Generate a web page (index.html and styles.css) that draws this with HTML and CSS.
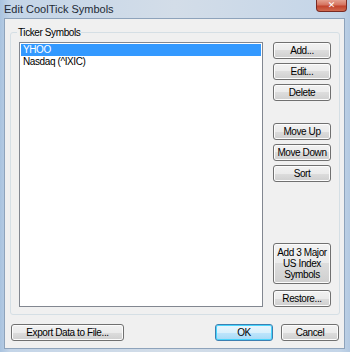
FILE: index.html
```html
<!DOCTYPE html>
<html lang="en">
<head>
    <meta charset="UTF-8">
    <title>Edit CoolTick Symbols</title>
    <link rel="stylesheet" href="styles.css">
</head>
<body>
    <div class="window">
        <div class="titlebar">
            <span class="title">Edit CoolTick Symbols</span>
            <span class="close-btn">&#x2715;</span>
        </div>
        <div class="client">
            <div class="group">
                <span class="group-label">Ticker Symbols</span>
                <div class="listbox">
                    <div class="item selected">YHOO</div>
                    <div class="item">Nasdaq (^IXIC)</div>
                </div>
                <div class="side">
                    <button class="btn">Add...</button>
                    <button class="btn">Edit...</button>
                    <button class="btn">Delete</button>
                    <button class="btn spaced">Move Up</button>
                    <button class="btn">Move Down</button>
                    <button class="btn">Sort</button>
                    <button class="btn tall">Add 3 Major<br>US Index<br>Symbols</button>
                    <button class="btn">Restore...</button>
                </div>
            </div>
            <div class="bottom">
                <button class="btn export">Export Data to File...</button>
                <button class="btn default">OK</button>
                <button class="btn">Cancel</button>
            </div>
        </div>
    </div>
</body>
</html>
```

FILE: styles.css
```css
body {
    margin: 0;
    padding: 0;
    font-family: "Liberation Sans", Arial, sans-serif;
    font-size: 10px;
    letter-spacing: -0.4px;
    color: #000;
    background-color: #fff;
}
.window {
    width: 350px;
    height: 352px;
    box-sizing: border-box;
    padding: 0 5px 3px 4px;
    display: flex;
    flex-direction: column;
    background: linear-gradient(90deg, #a9c3df 0%, #c4d5e8 3%, #d3dde8 50%, #c4d5e8 97%, #b3c9e1 100%);
    overflow: hidden;
}
.titlebar {
    height: 18px;
    flex: none;
    position: relative;
}
.title {
    display: block;
    padding-top: 2px;
    font-size: 11px;
    letter-spacing: 0;
    line-height: 14px;
    color: #1e2a36;
}
.close-btn {
    position: absolute;
    top: 0;
    right: -2px;
    width: 31px;
    height: 12px;
    box-sizing: border-box;
    border: 1px solid #7a2a22;
    border-top: none;
    border-radius: 0 0 4px 4px;
    background: linear-gradient(180deg, #e4a08f 0%, #d5735f 45%, #c2432c 55%, #d06a4f 100%);
    color: #fff;
    font-family: "DejaVu Sans", sans-serif;
    font-size: 9px;
    font-weight: bold;
    line-height: 10px;
    letter-spacing: 0;
    text-align: center;
}
.client {
    flex: 1;
    background-color: #f0f0f0;
    border: 1px solid #8ea3bb;
    box-sizing: border-box;
    display: flex;
    flex-direction: column;
}
.group {
    position: relative;
    margin: 13px 4px 0 5px;
    height: 283px;
    box-sizing: border-box;
    border: 1px solid #d5dfe5;
    border-radius: 3px;
    padding: 9px 8px 7px 8px;
    display: flex;
    gap: 10px;
}
.group-label {
    position: absolute;
    top: -7px;
    left: 6px;
    padding: 0 1px;
    line-height: 13px;
    background-color: #f0f0f0;
}
.listbox {
    width: 244px;
    height: 265px;
    box-sizing: border-box;
    border: 1px solid #828790;
    background-color: #fff;
    padding: 1px;
}
.item {
    height: 12px;
    line-height: 12px;
    padding-left: 2px;
    white-space: nowrap;
}
.item.selected {
    background-color: #3399ff;
    color: #fff;
}
.side {
    width: 58px;
    display: flex;
    flex-direction: column;
    gap: 4px;
}
.btn {
    font-family: "Liberation Sans", Arial, sans-serif;
    font-size: 10px;
    letter-spacing: -0.4px;
    color: #000;
    height: 17px;
    padding: 0;
    border: 1px solid #707070;
    border-radius: 3px;
    background: linear-gradient(180deg, #f2f2f2 0%, #ebebeb 50%, #dddddd 50%, #cfcfcf 100%);
    box-shadow: inset 0 0 0 1px #fcfcfc;
    line-height: 12px;
    text-align: center;
    white-space: nowrap;
}
.side .btn {
    width: 58px;
}
.side .spaced {
    margin-top: 18px;
}
.side .tall {
    margin-top: auto;
    height: 41px;
    line-height: 11px;
    margin-bottom: 2px;
}
.bottom {
    display: flex;
    margin: 9px 5px 0 6px;
    gap: 8px;
}
.bottom .btn {
    width: 58px;
}
.bottom .export {
    width: 113px;
    margin-right: auto;
}
.btn.default {
    border-color: #3c7fb1;
    background: linear-gradient(180deg, #eaf6fd 0%, #d9f0fc 50%, #bee6fd 50%, #a7d9f5 100%);
    box-shadow: inset 0 0 0 1px #48d5fd;
}
```
